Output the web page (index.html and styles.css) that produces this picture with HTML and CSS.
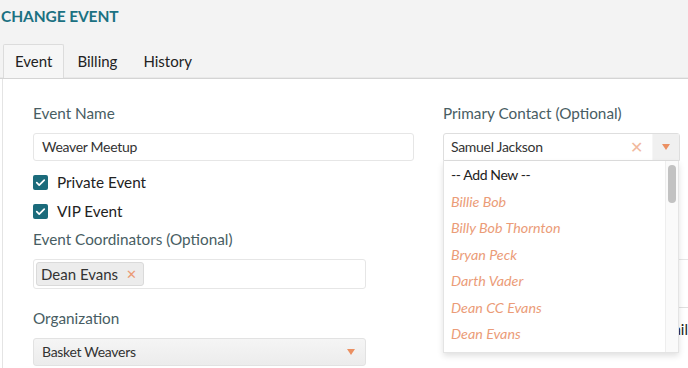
FILE: index.html
```html
<!DOCTYPE html>
<html>
<head>
<meta charset="utf-8">
<link rel="stylesheet" href="styles.css">
</head>
<body>
<div class="page">
  <div class="header">
    <h1 class="title">Change Event</h1>
    <div class="tabs">
      <div class="tab active">Event</div>
      <div class="tab">Billing</div>
      <div class="tab">History</div>
    </div>
  </div>
  <div class="panel">
    <div class="grid">
      <div class="col col-left">
        <div class="label">Event Name</div>
        <div class="input">Weaver Meetup</div>
        <div class="checks">
          <div class="check-row"><span class="checkbox"><svg viewBox="0 0 16 16" width="15" height="15"><path d="M4 8.2l2.6 2.6L12 5.4" fill="none" stroke="#fff" stroke-width="1.8" stroke-linecap="round" stroke-linejoin="round"/></svg></span>Private Event</div>
          <div class="check-row"><span class="checkbox"><svg viewBox="0 0 16 16" width="15" height="15"><path d="M4 8.2l2.6 2.6L12 5.4" fill="none" stroke="#fff" stroke-width="1.8" stroke-linecap="round" stroke-linejoin="round"/></svg></span>VIP Event</div>
        </div>
        <div class="label label-coord">Event Coordinators (Optional)</div>
        <div class="multi">
          <span class="tag">Dean Evans <span class="tag-x">✕</span></span>
        </div>
        <div class="label label-org">Organization</div>
        <div class="select">
          <span>Basket Weavers</span>
          <span class="caret"></span>
        </div>
      </div>
      <div class="col col-right">
        <div class="label">Primary Contact (Optional)</div>
        <div class="combo-wrap">
          <div class="combo">
            <span class="combo-text">Samuel Jackson</span>
            <span class="combo-clear">✕</span>
            <span class="combo-arrow"><span class="caret"></span></span>
          </div>
          <div class="dropdown">
            <ul class="options">
              <li class="opt-new">-- Add New --</li>
              <li>Billie Bob</li>
              <li>Billy Bob Thornton</li>
              <li>Bryan Peck</li>
              <li>Darth Vader</li>
              <li>Dean CC Evans</li>
              <li>Dean Evans</li>
            </ul>
            <div class="scrollbar"><div class="thumb"></div></div>
          </div>
        </div>
        <div class="behind">
          <div class="behind-line"></div>
          <div class="behind-box">Detail</div>
        </div>
      </div>
    </div>
  </div>
</div>
</body>
</html>
```
FILE: styles.css
```css
html, body {
  margin: 0;
  padding: 0;
  background: #ffffff;
  overflow: hidden;
}
body {
  font-family: Lato, "Open Sans", sans-serif;
  color: #222;
  width: 688px;
  height: 368px;
}
.header {
  background: #f3f3f3;
  height: 78px;
  border-bottom: 1px solid #d4d4d4;
  box-shadow: inset 0 -4px 0 -3px #e9e9e9;
  display: flex;
  flex-direction: column;
}
.title {
  margin: 0;
  padding: 6px 0 0 1px;
  font-size: 15.5px;
  line-height: 20px;
  font-weight: 700;
  text-transform: uppercase;
  color: #1b7182;
  letter-spacing: -0.1px;
}
.tabs {
  display: flex;
  margin-top: auto;
  padding-left: 3px;
}
.tab {
  font-size: 15px;
  line-height: 33px;
  padding: 0 11px 0 11px;
  color: #222;
  border: 1px solid transparent;
  border-bottom: none;
}
.tab + .tab {
  padding: 0 12px 0 12px;
}
.tab.active {
  background: #f6f6f6;
  border-color: #dcdcdc;
  border-radius: 2px 2px 0 0;
}
.panel {
  margin-left: 2px;
  border-left: 1px solid #e4e4e4;
  height: 289px;
  padding: 24px 0 0 30px;
  box-sizing: border-box;
}
.grid {
  display: grid;
  grid-template-columns: 381px 237px;
  column-gap: 29px;
}
.col {
  display: flex;
  flex-direction: column;
}
.label {
  font-size: 15.3px;
  line-height: 20px;
  color: #485d63;
  margin-bottom: 10px;
}
.input {
  height: 28px;
  box-sizing: border-box;
  border: 1px solid #e6e6e6;
  border-radius: 3px;
  padding: 0 8px;
  font-size: 14px;
  letter-spacing: -0.3px;
  line-height: 26px;
  color: #333;
}
.checks {
  padding-top: 13px;
  display: flex;
  flex-direction: column;
  gap: 12px;
}
.check-row {
  display: flex;
  align-items: center;
  gap: 9px;
  font-size: 15.3px;
  line-height: 17px;
  color: #222;
}
.checkbox {
  width: 15px;
  height: 15px;
  background: #1b6b7b;
  border-radius: 2px;
  display: flex;
}
.label-coord {
  margin-top: 9px;
}
.multi {
  width: 333px;
  height: 30px;
  box-sizing: border-box;
  border: 1px solid #e6e6e6;
  border-radius: 3px;
  padding: 2px;
  display: flex;
  align-items: center;
}
.tag {
  height: 24px;
  box-sizing: border-box;
  background: #ececec;
  border: 1px solid #dadada;
  border-radius: 3px;
  padding: 0 6px 0 4px;
  font-size: 15px;
  line-height: 22px;
  color: #333;
  display: flex;
  align-items: center;
  gap: 8px;
}
.tag-x {
  color: #eb9a75;
  font-size: 13px;
}
.label-org {
  margin-top: 19px;
}
.select {
  width: 333px;
  height: 28px;
  box-sizing: border-box;
  border: 1px solid #e2e2e2;
  border-radius: 3px;
  background: linear-gradient(#f5f5f5, #ececec);
  padding: 0 10px 0 8px;
  font-size: 14px;
  letter-spacing: -0.3px;
  line-height: 26px;
  color: #333;
  display: flex;
  justify-content: space-between;
  align-items: center;
}
.caret {
  width: 0;
  height: 0;
  border-left: 4px solid transparent;
  border-right: 4px solid transparent;
  border-top: 6px solid #eb9062;
}
.combo-wrap {
  position: relative;
  z-index: 2;
}
.combo {
  height: 28px;
  box-sizing: border-box;
  border: 1px solid #dedede;
  border-radius: 3px 3px 0 0;
  display: flex;
  align-items: stretch;
  font-size: 14px;
  letter-spacing: -0.3px;
  line-height: 26px;
  color: #333;
  background: #fff;
}
.combo-text {
  flex: 1;
  padding-left: 7px;
}
.combo-clear {
  color: #f1b99e;
  font-size: 16px;
  width: 20px;
  padding-right: 6px;
  text-align: center;
}
.combo-arrow {
  width: 26px;
  background: #f0f0f0;
  border-left: 1px solid #f6f6f6;
  display: flex;
  align-items: center;
  justify-content: center;
}
.dropdown {
  position: absolute;
  left: 0;
  top: 28px;
  width: 236px;
  height: 192px;
  box-sizing: border-box;
  background: #fff;
  border: 1px solid #e4e4e4;
  border-top: none;
  box-shadow: 0 3px 6px rgba(0, 0, 0, 0.12);
  display: flex;
}
.options {
  list-style: none;
  margin: 0;
  padding: 1px 0 0 0;
  flex: 1;
}
.options li {
  height: 26.5px;
  line-height: 26.5px;
  padding-left: 7px;
  font-size: 14.3px;
  font-style: italic;
  color: #eb9c78;
}
.options li.opt-new {
  font-style: normal;
  font-size: 14px;
  letter-spacing: -0.4px;
  color: #222;
}
.scrollbar {
  width: 13px;
  border-left: 1px solid #eeeeee;
  background: #fafafa;
  padding-top: 4px;
  box-sizing: border-box;
  display: flex;
  justify-content: center;
}
.thumb {
  width: 8px;
  height: 38px;
  background: #c2c2c2;
  border-radius: 4px;
}
.behind {
  position: relative;
  z-index: 1;
  margin-top: 98px;
  margin-right: -8px;
}
.behind-line {
  height: 1px;
  background: #e6e6e6;
}
.behind-box {
  margin-top: 47px;
  border-top: 1px solid #e0e0e0;
  height: 40px;
  font-size: 15px;
  line-height: 42px;
  text-align: right;
  padding-right: 0;
  color: #222;
}
```
